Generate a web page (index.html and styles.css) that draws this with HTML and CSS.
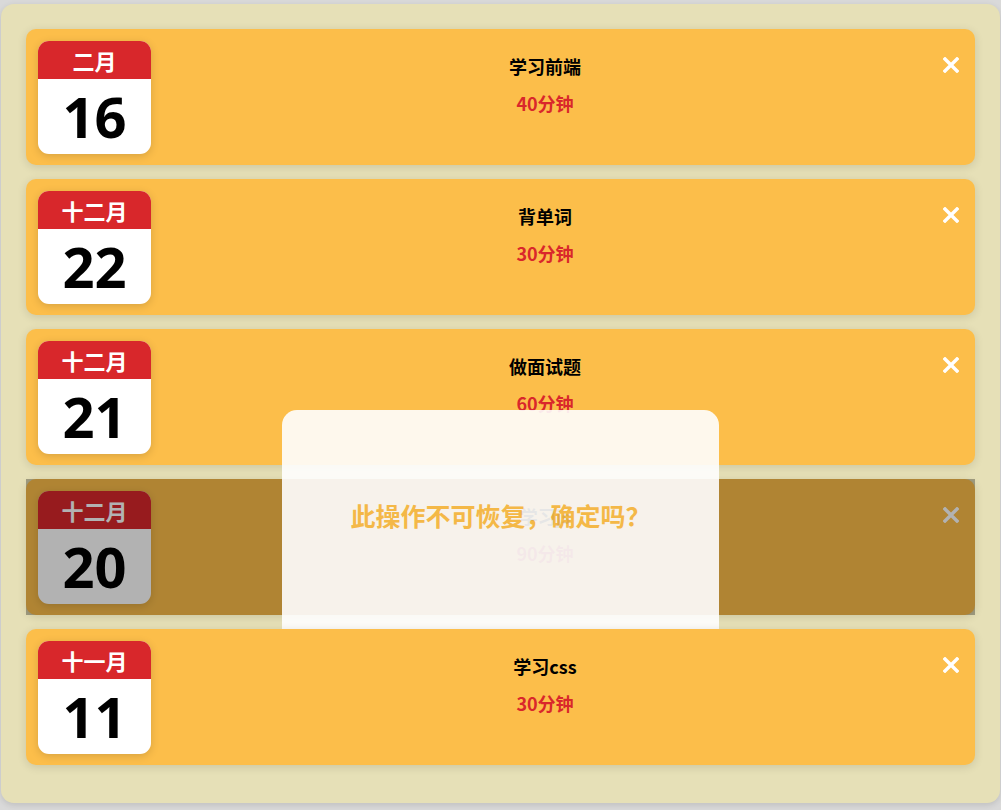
FILE: index.html
```html
<!DOCTYPE html>
<html lang="zh">
<head>
<meta charset="utf-8">
<title>Todo</title>
<link rel="stylesheet" href="styles.css">
</head>
<body>
<div class="board">
  <div class="card">
    <div class="cal"><div class="cal-month">二月</div><div class="cal-day">16</div></div>
    <div class="info"><div class="title">学习前端</div><div class="dur">40分钟</div></div>
    <div class="close"><svg viewBox="0 0 16 16" width="16" height="16"><path d="M2 2L14 14M14 2L2 14" stroke="#fff" stroke-width="3.4" stroke-linecap="square"/></svg></div>
  </div>
  <div class="card">
    <div class="cal"><div class="cal-month">十二月</div><div class="cal-day">22</div></div>
    <div class="info"><div class="title">背单词</div><div class="dur">30分钟</div></div>
    <div class="close"><svg viewBox="0 0 16 16" width="16" height="16"><path d="M2 2L14 14M14 2L2 14" stroke="#fff" stroke-width="3.4" stroke-linecap="square"/></svg></div>
  </div>
  <div class="card">
    <div class="cal"><div class="cal-month">十二月</div><div class="cal-day">21</div></div>
    <div class="info"><div class="title">做面试题</div><div class="dur">60分钟</div></div>
    <div class="close"><svg viewBox="0 0 16 16" width="16" height="16"><path d="M2 2L14 14M14 2L2 14" stroke="#fff" stroke-width="3.4" stroke-linecap="square"/></svg></div>
  </div>
  <div class="card">
    <div class="cal"><div class="cal-month">十二月</div><div class="cal-day">20</div></div>
    <div class="info"><div class="title">学习js</div><div class="dur">90分钟</div></div>
    <div class="close"><svg viewBox="0 0 16 16" width="16" height="16"><path d="M2 2L14 14M14 2L2 14" stroke="#fff" stroke-width="3.4" stroke-linecap="square"/></svg></div>
    <div class="mask"></div>
    <div class="modal"><div class="modal-text">此操作不可恢复，确定吗？</div></div>
  </div>
  <div class="card">
    <div class="cal"><div class="cal-month">十一月</div><div class="cal-day">11</div></div>
    <div class="info"><div class="title">学习css</div><div class="dur">30分钟</div></div>
    <div class="close"><svg viewBox="0 0 16 16" width="16" height="16"><path d="M2 2L14 14M14 2L2 14" stroke="#fff" stroke-width="3.4" stroke-linecap="square"/></svg></div>
  </div>
</div>
</body>
</html>
```

FILE: styles.css
```css
html, body {
  margin: 0;
  padding: 0;
}
body {
  background: #d9d9d9;
  font-family: "Noto Sans CJK SC", "Noto Sans", sans-serif;
  padding: 4px 1px 7px 1px;
}
.board {
  background: #e6e0b7;
  border-radius: 13px;
  box-shadow: 0 2px 6px rgba(0, 0, 0, 0.12);
  padding: 25px 25px 24px 25px;
}
.card {
  position: relative;
  display: flex;
  align-items: flex-start;
  height: 136px;
  box-sizing: border-box;
  padding: 12px;
  margin-bottom: 14px;
  background: #fcbe4a;
  border-radius: 10px;
  box-shadow: 0 2px 10px rgba(0, 0, 0, 0.12);
}
.cal {
  width: 113px;
  height: 113px;
  flex: none;
  background: #fff;
  border-radius: 11px;
  overflow: hidden;
  box-shadow: 0 2px 8px rgba(0, 0, 0, 0.15);
  display: flex;
  flex-direction: column;
}
.cal-month {
  height: 38px;
  background: #d8272b;
  color: #fff;
  font-weight: 700;
  font-size: 22px;
  line-height: 38px;
  text-align: center;
}
.cal-day {
  flex: 1;
  color: #000;
  font-family: "Open Sans", "Noto Sans", sans-serif;
  font-weight: 700;
  font-size: 56px;
  line-height: 74px;
  text-align: center;
}
.info {
  flex: 1;
  padding-top: 12px;
  text-align: center;
}
.title {
  color: #000;
  font-weight: 700;
  font-size: 18px;
  line-height: 26px;
}
.dur {
  margin-top: 11px;
  color: #d9272b;
  font-weight: 700;
  font-size: 18px;
  line-height: 26px;
}
.close {
  width: 24px;
  flex: none;
  padding-top: 16px;
  display: flex;
  justify-content: center;
}
.close svg {
  display: block;
}
.mask {
  position: absolute;
  left: 0;
  top: 0;
  right: 0;
  bottom: 0;
  background: rgba(0, 0, 0, 0.3);
}
.modal {
  position: absolute;
  left: 256px;
  top: -69px;
  width: 437px;
  height: 222px;
  box-sizing: border-box;
  padding-top: 90px;
  background: #fff;
  opacity: 0.9;
  border-radius: 15px 15px 0 0;
  text-align: center;
}
.modal-text {
  color: #fcbe4a;
  font-weight: 700;
  font-size: 25px;
  line-height: 30px;
}
```
